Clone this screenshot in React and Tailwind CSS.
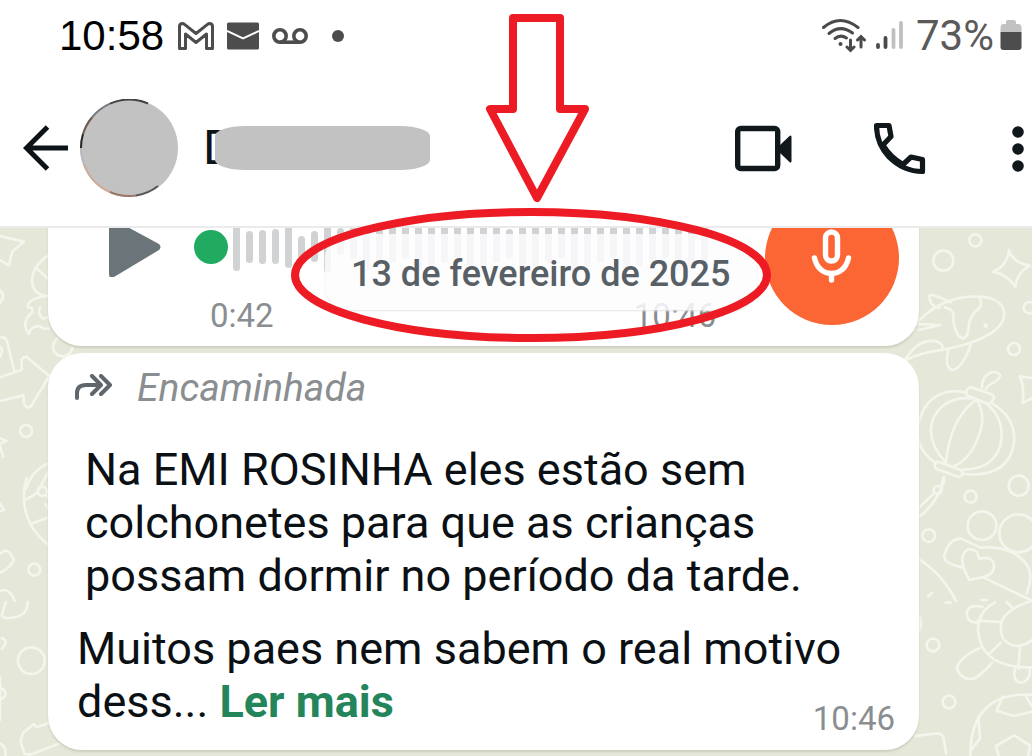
import React from "react";

// Waveform bars: [top, bottom] of each bar, 13px apart
const firstBars = [
  [0, 54],
  [14, 46],
  [13, 47],
  [12, 47],
  [6, 51],
  [19, 46],
  [14, 45],
  [2, 56],
  [11, 38],
];
const restBars = Array.from({ length: 28 }, (_, i) => [i === 12 ? 12 : 4, 42 + ((i * 7) % 4) * 4]);
const bars = [...firstBars, ...restBars];

const GmailIcon = () => (
  <svg className="h-7 w-9" viewBox="0 0 36 28" fill="none" stroke="#4d4d4d" strokeWidth="3" strokeLinejoin="round" aria-hidden="true">
    <path d="M1.5 26V4.5Q1.5 1.5 4.5 1.5Q5.500 1.500 6.500 2.300L18 11.500L29.500 2.300Q30.500 1.500 31.500 1.500Q34.500 1.500 34.500 4.500V26.500H28.500V12L18 20.500L7.500 12V26.500H1.500Z" />
  </svg>
);

const MailIcon = () => (
  <svg className="h-7 w-8" viewBox="0 0 32 28" aria-hidden="true">
    <rect y="0.500" width="32" height="27" rx="1.500" fill="#4d4d4d" />
    <path d="M0 9L16 16.500L32 9" fill="none" stroke="#fff" strokeWidth="2" />
  </svg>
);

const VoicemailIcon = () => (
  <svg className="h-4 w-9" viewBox="0 0 36 16" fill="none" stroke="#4d4d4d" strokeWidth="3.600" aria-hidden="true">
    <circle cx="8" cy="8" r="6.200" />
    <circle cx="28" cy="8" r="6.200" />
    <path d="M8 14.200H28" />
  </svg>
);

const WifiIcon = () => (
  <svg className="h-9 w-11" viewBox="0 0 44 36" fill="none" stroke="#4a4a4a" strokeWidth="3" strokeLinecap="round" aria-hidden="true">
    <path d="M1.500 9.500Q18 -4.500 36 9.500" />
    <path d="M7 15.500Q18.500 6 30.500 15" />
    <path d="M13 20.500Q18.500 16 24.500 20" />
    <circle cx="18.500" cy="26" r="1.200" fill="#4a4a4a" strokeWidth="1.600" />
    <path d="M28.500 22V32M25 29L28.500 32.500L32 29M39 29V19M35.500 22L39 18.500L42.500 22" />
  </svg>
);

const SignalIcon = () => (
  <svg className="h-8 w-7" viewBox="0 0 28 32" fill="none" strokeWidth="3.800" strokeLinecap="round" aria-hidden="true">
    <path d="M2 25V27M9.500 18V27" stroke="#4a4a4a" />
    <path d="M17.500 10V27M25 3V27" stroke="#c0c0c0" />
  </svg>
);

const BatteryIcon = () => (
  <svg className="h-8 w-[22px]" viewBox="0 0 22 32" aria-hidden="true">
    <path d="M0.500 12V8Q0.500 4 3.500 4H6V2Q6 0 8 0H14Q16 0 16 2V4H18.500Q21.500 4 21.500 8V12Z" fill="#c2c2c2" />
    <path d="M0.500 12H21.500V27Q21.500 30 18.500 30H3.500Q0.500 30 0.500 27Z" fill="#4d4d4d" />
  </svg>
);

const StatusBar = () => (
  <div className="flex h-[72px] items-center pr-[10px] pl-[59px]">
    <span className="font-['Liberation_Sans',sans-serif] text-[42px] leading-[48px] text-black">10:58</span>
    <div className="ml-[14px] flex items-center gap-[13px]">
      <GmailIcon />
      <MailIcon />
      <VoicemailIcon />
    </div>
    <span className="ml-6 size-3 rounded-full bg-[#4d4d4d]" />
    <div className="ml-auto flex items-center">
      <WifiIcon />
      <span className="ml-[10px] flex">
        <SignalIcon />
      </span>
      <span className="mr-[6px] ml-3 text-[42px] leading-[48px] text-[#5a5a5a]">73%</span>
      <BatteryIcon />
    </div>
  </div>
);

const Avatar = () => (
  <svg className="size-[98px]" viewBox="0 0 98 98" fill="none" aria-hidden="true">
    <circle cx="49" cy="49" r="49" fill="#c2c2c2" />
    <g strokeWidth="2">
      <path d="M68 4.500A48 48 0 0 0 30 4.700" stroke="#45413f" />
      <path d="M30 4.700A48 48 0 0 0 12 18.500" stroke="#777b82" />
      <path d="M12 18.500A48 48 0 0 0 3 35" stroke="#73594b" />
      <path d="M3 35A48 48 0 0 0 1 49" stroke="#292626" />
      <path d="M1 49A48 48 0 0 0 4 65" stroke="#b5b9c0" />
      <path d="M4 65A48 48 0 0 0 30 93" stroke="#cfab98" />
      <path d="M30 93A48 48 0 0 0 56 96.500" stroke="#9c7867" />
      <path d="M56 96.500A48 48 0 0 0 78 87" stroke="#58585c" />
    </g>
  </svg>
);

const AppBar = () => (
  <div className="flex h-[154px] items-center pr-[6px] pb-[2px] pl-[23px]">
    <button type="button" aria-label="Voltar">
      <svg className="h-[46px] w-[46px]" viewBox="0 0 46 46" fill="none" stroke="#0d1418" strokeWidth="5" aria-hidden="true">
        <path d="M24.500 2L3.500 23L24.500 44M3.500 23H45" />
      </svg>
    </button>
    <div className="ml-[11px]">
      <Avatar />
    </div>
    {/* Contact name, hidden under the grey mark */}
    <h1 className="relative ml-[25px] w-[227px] text-[48px] leading-[56px] text-[#0d1418]">
      D
      <span className="absolute inset-y-[6px] right-0 left-3 rounded-[30px/10px] bg-[#c2c2c2]" />
    </h1>
    <nav className="ml-auto flex items-center gap-[81px]">
      <button type="button" aria-label="Chamada de vídeo">
        <svg className="h-[54px] w-[58px]" viewBox="0 0 58 54" aria-hidden="true">
          <rect x="2.700" y="7.500" width="40" height="40" rx="3" fill="none" stroke="#10181c" strokeWidth="5.400" />
          <path d="M44 25L54.500 15Q56.500 13.500 56.500 16V40Q56.500 42.500 54.500 41L44 31Z" fill="#10181c" />
        </svg>
      </button>
      <button type="button" aria-label="Chamada de voz">
        <svg className="h-[54px] w-[55px]" viewBox="0 0 55 54" fill="none" stroke="#10181c" strokeWidth="5.200" strokeLinejoin="round" aria-hidden="true">
          <path d="M2.500 4.500H15L17 15.500L9 24Q16 36 29 43.500L37 36L48.500 38.500V50.500Q29.500 50.500 15 36Q2.500 22.500 2.500 4.500Z" />
        </svg>
      </button>
      <button type="button" aria-label="Mais opções">
        <svg className="h-[54px] w-4" viewBox="0 0 16 54" fill="#10181c" aria-hidden="true">
          <circle cx="8" cy="11" r="5.800" />
          <circle cx="8" cy="28" r="5.800" />
          <circle cx="8" cy="45" r="5.800" />
        </svg>
      </button>
    </nav>
  </div>
);

// Wallpaper doodles on the left side
const LeftDoodles = () => (
  <svg className="absolute top-0 left-0 h-[528px] w-[90px]" viewBox="0 24 270 1584" fill="none" stroke="#f4f5ec" strokeWidth="8" strokeLinecap="round" strokeLinejoin="round" aria-hidden="true">
    <path d="M0 48L16 52L72 65L37 94L27 136L0 120M0 210Q18 228 0 248" />
    <path d="M146 105Q95 140 96 185Q98 220 136 228L150 225M107 142L150 182M136 228Q78 238 84 262Q102 260 96 278Q62 305 86 342Q92 318 120 318Q126 328 146 326M120 262Q112 285 130 296L148 290" />
    <circle cx="188" cy="380" r="29" />
    <path d="M0 352Q14 348 20 362L43 452M0 380Q12 388 0 410" />
    <path d="M0 472L65 449V418Q76 404 86 416L148 468L92 560Q80 566 72 552L70 526L0 543" />
    <circle cx="78" cy="633" r="18" />
    <path d="M0 655L20 662L0 672M0 680L10 710M148 728Q96 750 78 806M148 750L118 806" />
    <path d="M148 976Q86 930 74 860Q68 810 80 775M80 838L116 816M92 912L146 892M138 826L148 835M136 852L148 868" />
    <circle cx="127" cy="814" r="14" />
    <path d="M0 850L12 870L0 874M0 1002L14 992Q28 990 42 1020Q30 1045 0 1058M0 1112Q28 1102 44 1142M18 1146L5 1185Q12 1200 40 1192Q82 1188 83 1146" />
    <circle cx="103" cy="1049" r="18" />
    <circle cx="94" cy="1322" r="40" />
    <path d="M5 1255Q28 1262 6 1286M6 1405Q28 1422 6 1436M0 1370V1500M0 1570Q20 1580 16 1608" />
    <path d="M148 1508L110 1522L102 1512L68 1540L62 1565L74 1602L90 1604L180 1570" />
  </svg>
);

// Wallpaper doodles on the right side
const RightDoodles = () => (
  <svg className="absolute top-0 right-0 h-[528px] w-[132px]" viewBox="0 24 396 1584" fill="none" stroke="#f4f5ec" strokeWidth="8" strokeLinecap="round" strokeLinejoin="round" aria-hidden="true">
    <circle cx="226" cy="61" r="18" />
    <circle cx="130" cy="122" r="30" />
    <path d="M327 91Q338 128 390 137Q350 158 346 201Q325 165 279 155Q322 138 327 91Z" />
    <circle cx="388" cy="263" r="17" />
    <circle cx="342" cy="387" r="18" />
    {/* fish */}
    <path d="M20 420Q50 400 135 388Q230 370 280 335Q325 300 308 262Q285 225 215 230Q130 232 58 300L25 350M58 330L120 315L55 312" />
    <path d="M152 247Q92 218 88 228Q90 262 120 264M134 262Q166 268 160 300Q166 348 188 355Q205 356 207 310Q212 285 236 266Q250 250 238 234M145 390Q132 448 160 450Q190 440 212 374M15 420Q50 362 98 362Q128 366 128 384" />
    <circle cx="257" cy="317" r="3" />
    {/* lantern */}
    <path d="M200 518Q120 500 76 560Q30 640 75 700Q90 718 108 730M272 548Q350 592 342 670Q325 775 190 762M215 535Q130 528 98 600Q78 665 138 728M225 542Q150 598 138 728M232 542Q260 590 235 650Q210 720 162 738M258 550Q320 600 300 680Q275 750 188 748" />
    <path d="M207 503Q192 515 202 526L262 551Q276 552 282 532Q282 525 270 521L214 502ZM111 725Q98 735 108 746L176 771Q190 768 187 752L120 727ZM246 503Q246 470 268 460Q290 450 301 465Q300 478 276 490Q260 500 258 508M132 770L124 796" />
    <circle cx="113" cy="810" r="12" />
    <path d="M396 474L360 469Q374 505 368 548L396 535M58 862L104 818M58 890Q110 850 134 780" />
    <circle cx="356" cy="797" r="30" />
    <circle cx="212" cy="830" r="18" />
    <circle cx="86" cy="947" r="19" />
    <circle cx="246" cy="917" r="43" />
    <circle cx="355" cy="940" r="57" />
    <path d="M185 1042Q130 1030 133 1008Q145 955 185 956L240 983Q350 974 388 1048Q396 1080 380 1120M250 1072L396 1142" />
    <path d="M208 1080Q182 1035 188 1008Q200 975 230 995L238 1016Q275 1006 282 1035Q284 1062 250 1071Z" />
    <path d="M58 1018Q130 1065 167 1142M84 1130L96 1118M138 1148H152M244 1140H262M58 1190Q68 1210 58 1230" />
    {/* turtle */}
    <path d="M248 1160Q202 1152 200 1180Q202 1210 234 1208M320 1146L338 1164M285 1148Q235 1172 234 1230Q242 1345 396 1342M396 1142Q330 1162 306 1200Q290 1270 350 1278Q378 1275 396 1260M234 1202L300 1206M302 1268L268 1302M360 1282L355 1346M240 1284Q180 1310 170 1345Q185 1385 225 1375Q255 1355 276 1328M345 1346Q336 1385 365 1388Q395 1380 388 1344" />
    <circle cx="99" cy="1275" r="19" />
    <circle cx="147" cy="1446" r="19" />
    {/* football */}
    <path d="M396 1424Q210 1415 211 1608M308 1430L290 1472L342 1488L396 1475M378 1430L396 1458M235 1490L240 1555L214 1590M296 1608L288 1578L342 1546L390 1576L384 1608M46 1548L112 1540Q130 1542 132 1560L138 1600" />
  </svg>
);

const AudioMessage = () => (
  <article className="relative mr-[113px] ml-12 flex -mt-[37px] h-[155px] rounded-b-[34px] bg-white pr-5 pl-[60px] shadow-[0_2px_2px_#cdcfbf]">
    <button type="button" aria-label="Reproduzir" className="mt-[26px] h-[60px]">
      <svg className="h-[60px] w-[54px]" viewBox="0 0 54 60" fill="#6a7479" aria-hidden="true">
        <path d="M1 0L51 27Q54 30 51 33L6 60Q1 62 1 57Z" />
      </svg>
    </button>
    <div className="mt-[26px] ml-8 w-[522px]">
      <svg className="h-[60px] w-[522px]" viewBox="0 0 522 60" aria-hidden="true">
        {bars.map(([top, bottom], i) => (
          <rect key={i} x={39 + i * 13} y={top} width="7" height={bottom - top} rx="3.500" fill="#d0d2d3" />
        ))}
        <circle cx="17" cy="30" r="17" fill="#20ab61" />
      </svg>
      <div className="mt-[19px] flex justify-between pl-4 text-[33px] leading-10 text-[#8a8e91]">
        <span>0:42</span>
        <time>10:46</time>
      </div>
    </div>
    <svg className="ml-auto size-[134px]" viewBox="0 0 134 134" fill="none" stroke="#fff" strokeWidth="5.400" strokeLinecap="round" aria-hidden="true">
      <circle cx="67" cy="67" r="67" fill="#fc6634" stroke="none" />
      <rect x="60.500" y="41" width="12" height="29" rx="6" />
      <path d="M49.500 67Q53 82 66.500 82.500Q80 82 83.500 67M66.500 83V89" />
    </svg>
  </article>
);

const TextMessage = () => (
  <article className="relative mt-[7px] mr-[113px] ml-12 flex flex-col rounded-[34px] bg-white pt-[11px] pr-6 pb-[11px] pl-[27px] text-[45px] leading-[53px] text-[#0b1014] shadow-[0_2px_2px_#cdcfbf]">
    <p className="flex items-center gap-6 text-[39px] leading-[48px] text-[#8a8e91] italic">
      <svg className="h-7 w-[38px]" viewBox="0 0 38 28" fill="none" stroke="#5f676c" strokeWidth="4" strokeLinecap="round" strokeLinejoin="round" aria-hidden="true">
        <path d="M2 24V19Q2 11 11 11H25M17 2L26 11L17 20M26 2L35 11L26 20" />
      </svg>
      Encaminhada
    </p>
    <p className="mt-[31px] pl-[10px]">Na EMI ROSINHA eles estão sem colchonetes para que as crianças possam dormir no período da tarde.</p>
    <p className="mt-5 pl-[2px]">
      Muitos paes nem sabem o real motivo dess...{" "}
      <a href="#ler-mais" className="font-bold text-[#25855a]">
        Ler mais
      </a>
    </p>
    <time className="-mt-[29px] self-end text-[33px] leading-10 text-[#8a8e91]">10:46</time>
  </article>
);

// Red arrow and ellipse drawn on top of the chat
const DateHighlight = () => (
  <svg className="pointer-events-none absolute top-0 left-[285px] h-[350px] w-[492px]" viewBox="285 0 492 350" fill="none" stroke="#ed1c24" strokeWidth="8" strokeLinejoin="round" aria-hidden="true">
    <path d="M513 18H560V109H585L537 198L490 109H513Z" />
    <ellipse cx="531" cy="275" rx="236" ry="63" />
  </svg>
);

const App = () => {
  return (
    <div className="relative flex min-h-screen flex-col bg-white font-[Roboto,sans-serif]">
      <header className="border-b-2 border-[#ebebeb] bg-white">
        <StatusBar />
        <AppBar />
      </header>
      <main className="relative flow-root flex-1 overflow-hidden bg-[#e5e7d8]">
        <LeftDoodles />
        <RightDoodles />
        <AudioMessage />
        <TextMessage />
        <div className="absolute top-[6px] left-[325px] rounded-3xl bg-[#fdfdfe]/85 px-[26px] pt-[18px] pb-[14px] text-[36px] leading-[44px] font-medium whitespace-nowrap text-[#586066] shadow-[0_1px_2px_#e4e4e4]">
          13 de fevereiro de 2025
        </div>
      </main>
      <DateHighlight />
    </div>
  );
};

export default App;
